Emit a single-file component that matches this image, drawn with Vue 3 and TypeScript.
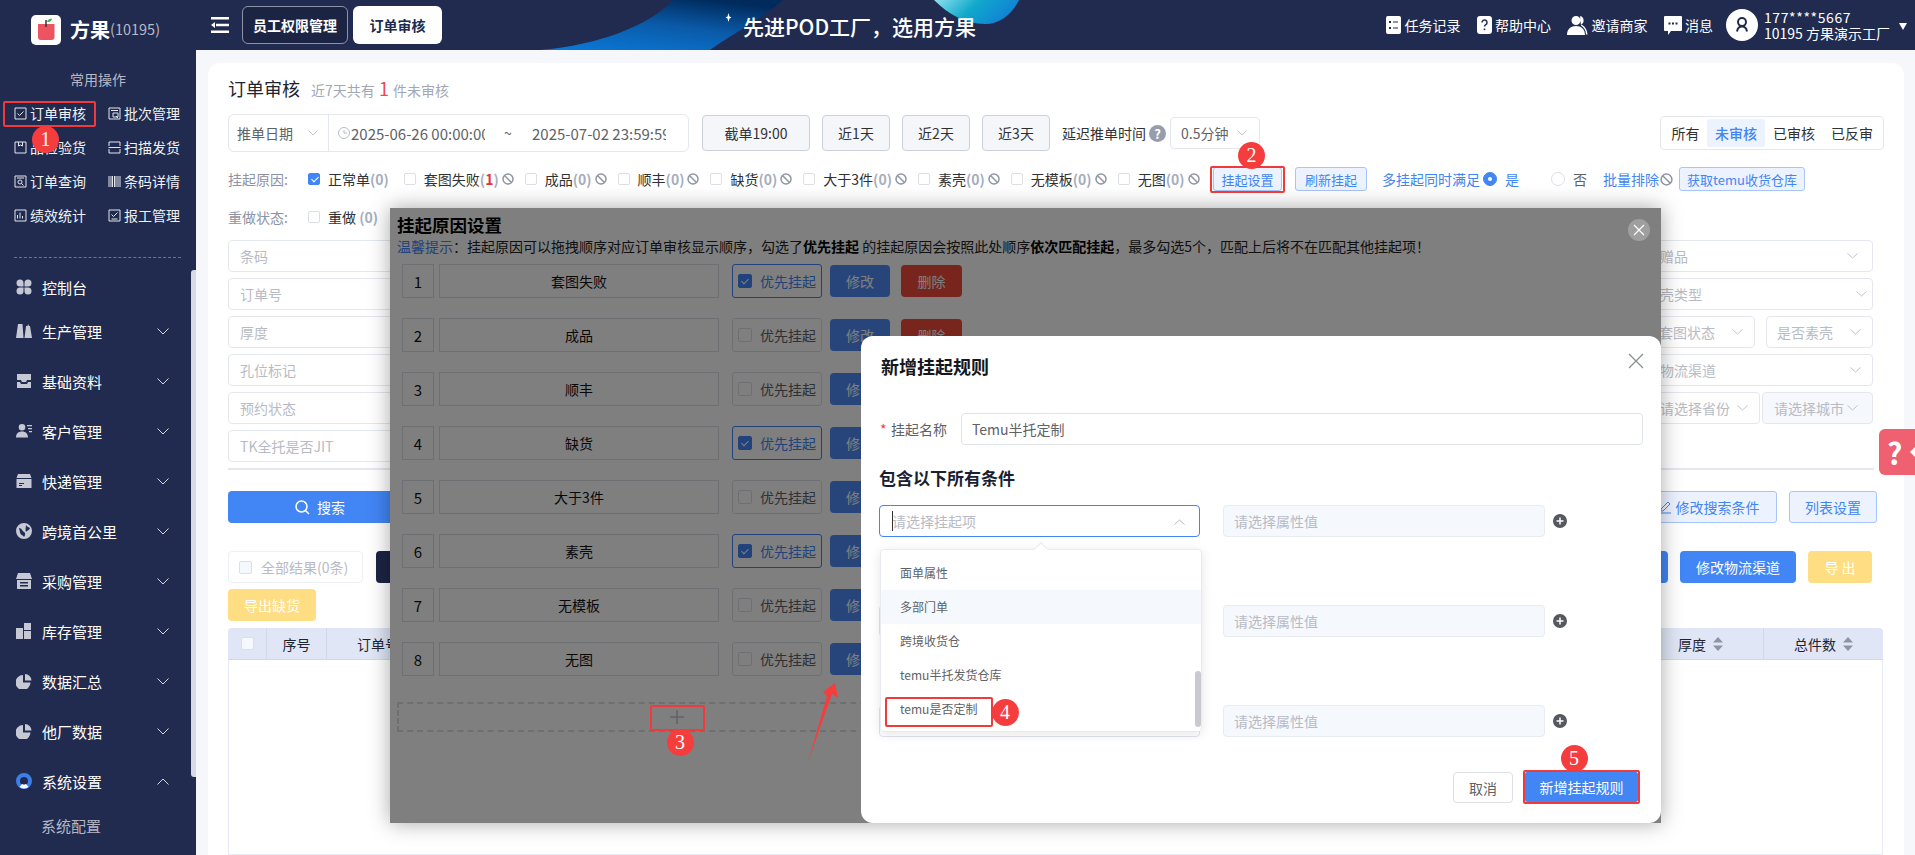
<script setup lang="ts">
interface MenuItem { name: string; d: string; d2?: string; open?: boolean; first?: boolean; active?: boolean; noArrow?: boolean }
const quick = [
  { name: '订单审核', d: 'M1 1h11v11H1z M3.5 6.5l2 2 4-4' },
  { name: '批次管理', d: 'M1 1h11v11H1z M3 3.5h7 M5 6h5v4H5z M8 9l2 2' },
  { name: '品检验货', d: 'M1 1h11v11H1z M4.5 1v4l2-1 2 1V1' },
  { name: '扫描发货', d: 'M1 5V1h11v4 M0.5 6.5h12 M1 8v4h11V8' },
  { name: '订单查询', d: 'M1 1h11v11H1z M3 3h7 M6 5a2 2 0 1 1 0 4 2 2 0 0 1 0-4z M7.5 8.5l2 2' },
  { name: '条码详情', d: 'M1 1v11 M3 1v11 M4.5 1v11 M6.5 1v11 M8 1v11 M10 1v11 M12 1v11' },
  { name: '绩效统计', d: 'M1 1h11v11H1z M3.5 9.5V6 M6 9.5V3.5 M8.5 9.5V7' },
  { name: '报工管理', d: 'M1 1h11v11H1z M3.5 5.5l2 2 4-4 M3.5 10h6' }
]
const menus: MenuItem[] = [
  { name: '控制台', first: true, noArrow: true, d: 'M7.500 7.500H4a3.500 3.500 0 1 1 3.500-3.500z M8.500 7.500V4a3.500 3.500 0 1 1 3.500 3.500z M7.500 8.500V12a3.500 3.500 0 1 1-3.500-3.500z M8.500 8.500H12a3.500 3.500 0 1 1-3.500 3.500z' },
  { name: '生产管理', d: 'M2 1h4.500l1 14H0z M10 3h1.500l.5-2 1 2h1l2 12H8.500z' },
  { name: '基础资料', d: 'M1 1h14v6h-4l-1 2H6L5 7H1z M1 9h3l1 2h6l1-2h3v6H1z' },
  { name: '客户管理', d: 'M6 1a3.300 3.300 0 1 1 0 6.600A3.300 3.300 0 0 1 6 1z M0 14.500c0-4 2.500-6 6-6s6 2 6 6z M11 2h5v1.300h-5z M12 5h4v1.300h-4z M13 8h3v1.300h-3z' },
  { name: '快递管理', d: 'M2 1h12l1.500 4H.5z M.5 6h15v9H.5z M3 10h5v1H3z M3 12h3v1H3z' },
  { name: '跨境首公里', d: 'M8 0a8 8 0 1 1 0 16A8 8 0 0 1 8 0z M3 5c3 0 3 3 5 4s1 4 0 5c-1-2-4-2-4-5z M10 2c1 2 3 2 4 3-1 3-3 2-4 4-1-2 0-5 0-7z' },
  { name: '采购管理', d: 'M2 0h12l2 6H0z M1 7h14v9H1z M4 9h8v1.500H4z M4 12h8v1.500H4z' },
  { name: '库存管理', d: 'M0 5h7v11H0z M8 0h7v7H8z M8 8h7v8H8z' },
  { name: '数据汇总', d: 'M7 2v7.500h7.500A7.500 7.500 0 1 1 7 2z M9 1a6.500 6.500 0 0 1 6.500 6.500H9z' },
  { name: '他厂数据', d: 'M7 2v7.500h7.500A7.500 7.500 0 1 1 7 2z M9 1a6.500 6.500 0 0 1 6.500 6.500H9z' },
  { name: '系统设置', active: true, open: true, d: 'M8 0a8 8 0 1 1 0 16A8 8 0 0 1 8 0z M8 4a4 4 0 1 0 0 8 4 4 0 0 0 0-8z', d2: 'M3.500 14l2.500-3a4 4 0 0 0 4 0l2.500 3a8 8 0 0 1-9 0z' }
]
const reasons = [
  { name: '套图失败', count: 1 }, { name: '成品', count: 0 }, { name: '顺丰', count: 0 }, { name: '缺货', count: 0 },
  { name: '大于3件', count: 0 }, { name: '素壳', count: 0 }, { name: '无模板', count: 0 }, { name: '无图', count: 0 }
]
const filterRows = [
  { left: '条码', right: [{ text: '是否赠品', cls: 'w253 ch14' }] },
  { left: '订单号', right: [{ text: '手机壳类型', cls: 'w253 ch5' }] },
  { left: '厚度', right: [{ text: '套图状态', cls: 'w107 ch10' }, { text: '是否素壳', cls: 'w107 ch10' }] },
  { left: '孔位标记', right: [{ text: '物流渠道', cls: 'w225 ch10' }] },
  { left: '预约状态', right: [{ text: '请选择省份', cls: 'w112 ch10' }, { text: '请选择城市', cls: 'w111 ch14 off' }] },
  { left: 'TK全托是否JIT', right: [] }
]
const rules = [
  { name: '套图失败', on: true }, { name: '成品', on: false }, { name: '顺丰', on: false }, { name: '缺货', on: true },
  { name: '大于3件', on: false }, { name: '素壳', on: true }, { name: '无模板', on: false }, { name: '无图', on: false }
]
const options = ['面单属性', '多部门单', '跨境收货仓', 'temu半托发货仓库', 'temu是否定制']
const boxes = [
  { l: 3, t: 101, w: 93, h: 26 }, { l: 1210, t: 166, w: 75, h: 27 }, { l: 650, t: 705, w: 55, h: 26 },
  { l: 885, t: 697, w: 108, h: 30 }, { l: 1523, t: 770, w: 117, h: 34 }
]
const badges = [
  { n: 1, x: 45.5, y: 139.5 }, { n: 2, x: 1251.5, y: 155 }, { n: 3, x: 680, y: 742 }, { n: 4, x: 1005, y: 712 }, { n: 5, x: 1574, y: 758 }
]
</script>

<template>
  <div class="app">
    <header class="topbar">
      <svg class="swoosh" width="1915" height="50" viewBox="0 0 1915 50" aria-hidden="true">
        <defs>
          <linearGradient id="sw" x1="0.1" y1="1" x2="0.7" y2="0">
            <stop offset="0" stop-color="#0b78d6" />
            <stop offset="0.55" stop-color="#0a5aa8" />
            <stop offset="1" stop-color="#002b5c" />
          </linearGradient>
          <linearGradient id="bb" x1="0" y1="0" x2="1" y2="0.3">
            <stop offset="0" stop-color="#8fe0ee" />
            <stop offset="0.5" stop-color="#10a9cb" />
            <stop offset="1" stop-color="#1180d6" />
          </linearGradient>
        </defs>
        <path d="M540 50C600 45 650 25 673 0H783C760 20 730 35 710 50Z" fill="url(#sw)" />
        <path d="M934 0H1019C1012 14 1000 24 985 24C965 24 948 14 934 0Z" fill="url(#bb)" />
        <path d="M728.500 13l1 3.500 2 1-2 1-1 3.500-1-3.500-2-1 2-1z" fill="#fff" />
      </svg>
      <div class="brand">
        <svg class="logo" width="30" height="30" viewBox="0 0 30 30">
          <rect width="30" height="30" rx="5" fill="#fff" />
          <path d="M7 9h16.500v13a3 3 0 0 1-3 3H10a3 3 0 0 1-3-3z" fill="#ee5361" />
          <path d="M15 5v7" stroke="#333" stroke-width="1.500" />
          <path d="M16 7c1-3 3-3.500 5-3.500 0 2-2 4-5 3.500z" fill="#3bb24a" />
        </svg>
        <b class="brand-name">方果</b><span class="brand-id">(10195)</span>
      </div>
      <svg class="burger" width="18" height="16" viewBox="0 0 18 16">
        <path d="M0 0h18v2.500H0z M5 6.700h13v2.500H5z M0 13.500h18V16H0z M4 5v6L0 8z" fill="#fff" />
      </svg>
      <div class="tab dark">员工权限管理</div>
      <div class="tab light">订单审核</div>
      <div class="slogan">先进POD工厂，选用方果</div>
      <nav class="tools">
        <span class="tool first">
          <svg width="15" height="18" viewBox="0 0 15 18"><rect width="15" height="18" rx="2" fill="#fff" /><path d="M3 5h2v2H3z M3 11h2v2H3z M7 5.500h5v1H7z M7 11.500h5v1H7z" fill="#212b4f" /></svg>任务记录
        </span>
        <span class="tool">
          <svg width="15" height="18" viewBox="0 0 15 18"><rect width="15" height="18" rx="3" fill="#fff" /><path d="M5 6.500a2.500 2.500 0 1 1 3.800 2.100c-.9.600-1.300 1-1.300 2" fill="none" stroke="#212b4f" stroke-width="1.500" /><path d="M6.700 12.500h1.600v1.700H6.700z" fill="#212b4f" /></svg>帮助中心
        </span>
        <span class="tool">
          <svg width="21" height="20" viewBox="0 0 21 20"><path d="M9 1a4.500 4.500 0 1 1 0 9 4.500 4.500 0 0 1 0-9z M0 20c0-6 4-9 9-9s9 3 9 9z M13 1a4.500 4.500 0 0 1 1 8.500c3 1 6 4 6.500 10H19c0-4-2-7-5-9z" fill="#fff" fill-rule="evenodd" /></svg>邀请商家
        </span>
        <span class="tool">
          <svg width="18" height="20" viewBox="0 0 18 20"><path d="M1 1h16a1 1 0 0 1 1 1v13a1 1 0 0 1-1 1H7l-3 4v-4H1a1 1 0 0 1-1-1V2a1 1 0 0 1 1-1z" fill="#fff" /><path d="M4.500 7.500h2v2h-2z M8 7.500h2v2H8z M11.500 7.500h2v2h-2z" fill="#212b4f" /></svg>消息
        </span>
        <svg class="avatar" width="32" height="32" viewBox="0 0 32 32">
          <circle cx="16" cy="16" r="16" fill="#fff" />
          <path d="M16 9a4 4 0 0 1 4 4c0 2-1.500 4-4 4s-4-2-4-4a4 4 0 0 1 4-4z M11 22.500c.5-3 2-5 5-5s4.500 2 5 5" fill="none" stroke="#212b4f" stroke-width="2" />
        </svg>
        <div class="user"><div class="phone">177****5667</div><div>10195&nbsp;方果演示工厂</div></div>
        <svg class="caret" width="8" height="7" viewBox="0 0 8 7"><path d="M0 0h8L4 7z" fill="#fff" /></svg>
      </nav>
    </header>

    <div class="body">
      <aside class="side">
        <div class="side-title">常用操作</div>
        <div class="quick">
          <div v-for="q in quick" :key="q.name" class="quick-item">
            <svg width="13" height="13" viewBox="0 0 13 13"><path :d="q.d" fill="none" stroke="#e4e6ee" stroke-width="1" /></svg>
            <span>{{ q.name }}</span>
          </div>
        </div>
        <div class="side-divider"></div>
        <div v-for="m in menus" :key="m.name" class="menu-item" :class="{ first: m.first }">
          <svg width="16" height="16" viewBox="0 0 16 16">
            <path :d="m.d" :fill="m.active ? '#3d7fe8' : '#c6c9d4'" fill-rule="evenodd" />
            <path v-if="m.d2" :d="m.d2" fill="#fff" />
          </svg>
          <span class="menu-name">{{ m.name }}</span>
          <svg v-if="!m.noArrow" class="menu-arrow" width="12" height="7" viewBox="0 0 12 7">
            <path :d="m.open ? 'M.5 6.500L6 1l5.500 5.500' : 'M.5.5L6 6 11.500.5'" fill="none" stroke="#d6d9e2" stroke-width="1" />
          </svg>
        </div>
        <div class="sub-item">系统配置</div>
        <div class="side-scroll"></div>
      </aside>

      <main class="main">
        <section class="card">
          <div class="title-row">
            <h1>订单审核</h1>
            <span class="sub">近7天共有 <em>1</em> 件未审核</span>
          </div>

          <div class="row-one">
            <div class="range">
              <div class="range-type">推单日期
                <svg width="10" height="6" viewBox="0 0 10 6"><path d="M.5.5L5 5 9.500.5" fill="none" stroke="#c0c4cc" /></svg>
              </div>
              <svg class="clock" width="12" height="12" viewBox="0 0 12 12"><circle cx="6" cy="6" r="5.500" fill="none" stroke="#b8bbc4" /><path d="M6 3v3h3" fill="none" stroke="#b8bbc4" /></svg>
              <span class="date">2025-06-26 00:00:00</span>
              <span class="tilde">~</span>
              <span class="date">2025-07-02 23:59:59</span>
            </div>
            <button class="plain wide">截单19:00</button>
            <button class="plain">近1天</button>
            <button class="plain">近2天</button>
            <button class="plain">近3天</button>
            <span class="delay">延迟推单时间</span>
            <span class="help">?</span>
            <div class="mini-select">0.5分钟
              <svg width="10" height="6" viewBox="0 0 10 6"><path d="M.5.5L5 5 9.500.5" fill="none" stroke="#c0c4cc" /></svg>
            </div>
            <div class="toggle">
              <span>所有</span><span class="on">未审核</span><span>已审核</span><span>已反审</span>
            </div>
          </div>

          <div class="row-two">
            <span class="row-label">挂起原因:</span>
            <div class="reasons">
              <span class="reason normal"><i class="check on"></i><span>正常单<b class="cnt">(0)</b></span></span>
              <span v-for="r in reasons" :key="r.name" class="reason">
                <i class="check"></i>
                <span>{{ r.name }}<b class="cnt">(<em v-if="r.count">{{ r.count }}</em><template v-else>0</template>)</b></span>
                <svg width="12" height="12" viewBox="0 0 12 12"><circle cx="6" cy="6" r="5" fill="none" stroke="#8f95a3" stroke-width="1.500" /><path d="M2.500 2.500l7 7" stroke="#8f95a3" stroke-width="1.500" /></svg>
              </span>
            </div>
            <button class="soft s69">挂起设置</button>
            <button class="soft s72">刷新挂起</button>
            <span class="link l1">多挂起同时满足</span>
            <i class="radio on"></i>
            <span class="link l2">是</span>
            <i class="radio r2"></i>
            <span class="no">否</span>
            <span class="link l3">批量排除</span>
            <svg class="ban-link" width="13" height="13" viewBox="0 0 12 12"><circle cx="6" cy="6" r="5" fill="none" stroke="#8f95a3" stroke-width="1.400" /><path d="M2.500 2.500l7 7" stroke="#8f95a3" stroke-width="1.400" /></svg>
            <button class="soft s126">获取temu收货仓库</button>
          </div>

          <div class="row-three">
            <span class="row-label">重做状态:</span>
            <span class="reason redo"><i class="check"></i><span>重做 <b class="cnt">(0)</b></span></span>
          </div>

          <div class="filters">
            <div v-for="row in filterRows" :key="row.left" class="filter-row">
              <div class="field left">{{ row.left }}</div>
              <div class="right-group">
                <div v-for="f in row.right" :key="f.text" class="field sel" :class="f.cls">
                  {{ f.text }}
                  <svg width="11" height="6" viewBox="0 0 11 6"><path d="M.5.500L5.500 5l5-4.500" fill="none" stroke="#c0c4cc" /></svg>
                </div>
              </div>
            </div>
          </div>
          <div class="split"></div>

          <div class="row-search">
            <button class="primary search">
              <svg width="15" height="15" viewBox="0 0 15 15"><circle cx="6.500" cy="6.500" r="5.500" fill="none" stroke="#fff" stroke-width="1.500" /><path d="M10.500 10.500l3.500 3.500" stroke="#fff" stroke-width="1.500" /></svg>
              搜索
            </button>
            <div class="search-right">
              <button class="soft big edit">
                <svg width="14" height="14" viewBox="0 0 14 14"><path d="M1 13h12 M3 9l7-7 2 2-7 7H3z" fill="none" stroke="#4285f4" /></svg>
                修改搜索条件
              </button>
              <button class="soft big set">列表设置</button>
            </div>
          </div>

          <div class="row-actions">
            <div class="all"><i class="check pale"></i>全部结果(0条)</div>
            <button class="navy"></button>
            <div class="action-right">
              <button class="primary a1"></button>
              <button class="primary a2">修改物流渠道</button>
              <button class="yellow a3">导 出</button>
            </div>
          </div>
          <div class="row-export"><button class="yellow">导出缺货</button></div>

          <div class="table">
            <div class="thead">
              <div class="th c1"><i class="check head"></i></div>
              <div class="th c2">序号</div>
              <div class="th c3">订单号</div>
              <div class="th grow"></div>
              <div class="th c4">厚度
                <svg width="10" height="14" viewBox="0 0 10 14"><path d="M5 0l5 5.500H0z M5 14L0 8.500h10z" fill="#8d94a6" /></svg>
              </div>
              <div class="th c5">总件数
                <svg width="10" height="14" viewBox="0 0 10 14"><path d="M5 0l5 5.500H0z M5 14L0 8.500h10z" fill="#8d94a6" /></svg>
              </div>
            </div>
            <div class="tbody"></div>
          </div>
        </section>
      </main>
    </div>

    <div class="help-tab"><span>?</span><i></i></div>

    <section class="panel">
      <h2>挂起原因设置</h2>
      <p class="tip"><span>温馨提示</span>：挂起原因可以拖拽顺序对应订单审核显示顺序，勾选了<b>优先挂起</b> 的挂起原因会按照此处顺序<b>依次匹配挂起</b>，最多勾选5个，匹配上后将不在匹配其他挂起项！</p>
      <div class="rules">
        <div v-for="(r, i) in rules" :key="r.name" class="rule">
          <div class="r-num">{{ i + 1 }}</div>
          <div class="r-name">{{ r.name }}</div>
          <div class="r-check" :class="{ on: r.on }"><i class="check big" :class="{ on: r.on }"></i>优先挂起</div>
          <button class="r-btn blue">修改</button>
          <button class="r-btn red">删除</button>
        </div>
      </div>
      <div class="dash">
        <svg width="14" height="14" viewBox="0 0 14 14"><path d="M7 0v14 M0 7h14" stroke="#c0c4cc" stroke-width="1.500" /></svg>
      </div>
      <div class="panel-close">
        <svg width="12" height="12" viewBox="0 0 12 12"><path d="M1 1l10 10 M11 1L1 11" stroke="#fff" stroke-width="1.200" /></svg>
      </div>
    </section>

    <section class="dialog">
      <h3>新增挂起规则</h3>
      <svg class="dialog-close" width="16" height="16" viewBox="0 0 16 16"><path d="M1 1l14 14 M15 1L1 15" stroke="#8a8d94" stroke-width="1.300" /></svg>
      <div class="name-row">
        <span class="star">*</span><label>挂起名称</label>
        <div class="name-input">Temu半托定制</div>
      </div>
      <h4>包含以下所有条件</h4>
      <div v-for="n in 3" :key="n" class="cond">
        <div class="cond-select" :class="{ focus: n === 1 }">
          <span v-if="n === 1" class="caret-line"></span>请选择挂起项
          <svg width="11" height="6" viewBox="0 0 11 6"><path d="M.5 5.500L5.500 1l5 4.500" fill="none" stroke="#b8bbc4" /></svg>
        </div>
        <div class="cond-value">请选择属性值</div>
        <svg class="cond-plus" width="14" height="14" viewBox="0 0 14 14"><circle cx="7" cy="7" r="7" fill="#55585f" /><path d="M7 3.500v7 M3.500 7h7" stroke="#fff" stroke-width="1.500" /></svg>
      </div>
      <div class="dialog-foot">
        <button class="cancel">取消</button>
        <button class="confirm">新增挂起规则</button>
      </div>
      <div class="dropdown">
        <span class="pointer"></span>
        <div v-for="(o, i) in options" :key="o" class="opt" :class="{ hover: i === 1 }">{{ o }}</div>
        <span class="dd-scroll"></span>
      </div>
    </section>

    <div v-for="(b, i) in boxes" :key="i" class="mark"
      :style="{ left: b.l + 'px', top: b.t + 'px', width: b.w + 'px', height: b.h + 'px' }"></div>
    <div v-for="b in badges" :key="b.n" class="badge"
      :style="{ left: b.x - 13.5 + 'px', top: b.y - 13.5 + 'px' }">{{ b.n }}</div>
    <svg class="arrow" width="40" height="85" viewBox="800 680 40 85">
      <path d="M835 683L838 698 832 694 808 762 827 696 823 692Z" fill="#f63d3d" />
    </svg>
  </div>
</template>

<style>
html, body { margin: 0; padding: 0; background: #f6f7fb; }
</style>

<style scoped>
* { box-sizing: border-box; }
button { font-family: inherit; cursor: pointer; padding: 0; }
i, em { font-style: normal; }
.app { position: relative; width: 1915px; height: 855px; overflow: hidden; display: flex; flex-direction: column; font-family: "Noto Sans CJK SC", "Noto Sans", sans-serif; font-size: 14px; color: #303133; background: #f6f7fb; }

/* top bar */
.topbar { position: relative; flex: none; height: 50px; background: #212b4f; display: flex; align-items: center; color: #fff; }
.swoosh { position: absolute; left: 0; top: 0; }
.brand { position: relative; width: 211px; padding-left: 31px; display: flex; align-items: center; }
.logo { margin-top: 10px; flex: none; }
.brand-name { margin: 10px 0 0 9px; font-size: 20px; line-height: 30px; font-weight: 700; }
.brand-id { margin-top: 8px; font-size: 14.500px; color: #b6bac8; line-height: 30px; }
.burger { position: relative; flex: none; }
.tab { position: relative; height: 38px; border-radius: 6px; font-weight: 700; display: flex; align-items: center; justify-content: center; }
.tab.dark { margin-left: 13px; width: 106px; background: #1c2444; border: 1px solid #8d93a6; }
.tab.light { margin-left: 5px; width: 89px; background: #fff; color: #212b4f; }
.slogan { position: absolute; left: 743px; top: 13px; font-size: 21px; line-height: 26px; font-weight: 500; white-space: nowrap; }
.tools { position: relative; margin-left: auto; display: flex; align-items: center; padding-right: 8px; }
.tool { display: flex; align-items: center; gap: 3.500px; margin-right: 16px; white-space: nowrap; }
.avatar { margin-left: -3px; flex: none; }
.user { margin-left: 6px; font-size: 14px; line-height: 16px; white-space: nowrap; width: 125px; }
.phone { letter-spacing: .6px; }
.caret { margin-left: 10px; margin-top: 3px; }

/* layout */
.body { flex: 1; min-height: 0; display: flex; }
.side { position: relative; flex: none; width: 196px; background: #212b4f; color: #fff; }
.side-title { padding-top: 19px; line-height: 20px; text-align: center; color: #b6bac8; width: 196px; }
.quick { margin-top: 7px; display: grid; grid-template-columns: 94px 88px; grid-auto-rows: 34px; padding-left: 14px; }
.quick-item { display: flex; align-items: center; gap: 3px; white-space: nowrap; color: #f0f1f5; }
.side-divider { margin: 25px 15px 0 14px; border-top: 1px dashed #6b7290; }
.menu-item { height: 50px; display: flex; align-items: center; padding-left: 16px; position: relative; }
.menu-item.first { height: 38px; margin-top: 10px; }
.menu-name { margin-left: 10px; font-size: 15px; white-space: nowrap; }
.menu-arrow { position: absolute; left: 157px; top: 22px; }
.sub-item { height: 40px; line-height: 40px; padding-left: 41px; font-size: 15px; color: #b4b8c6; }
.side-scroll { position: absolute; left: 191px; top: 220px; width: 5px; height: 507px; background: #d8dbe5; border-radius: 3px 0 0 3px; }
.main { flex: 1; min-width: 0; padding: 13px 11px 0 12px; }
.card { height: 100%; background: #fff; border-radius: 12px 12px 0 0; padding: 0 20px; display: flex; flex-direction: column; }

.title-row { flex: none; height: 51px; display: flex; align-items: center; padding-bottom: 2px; }
.title-row h1 { margin: 0; font-size: 18px; font-weight: 400; color: #1f2433; }
.sub { margin-left: 11px; color: #a2a7b6; white-space: nowrap; }
.sub em { color: #f0484e; font-size: 18px; margin: 0 1px; }

.row-one { flex: none; height: 38px; display: flex; align-items: center; }
.range { width: 461px; height: 38px; border: 1px solid #e4e7ed; border-radius: 6px; display: flex; align-items: center; color: #606266; margin-right: 13px; white-space: nowrap; }
.range-type { width: 100px; height: 100%; border-right: 1px solid #e4e7ed; padding-left: 8px; display: flex; align-items: center; gap: 15px; flex: none; }
.clock { margin-left: 9px; flex: none; }
.date { width: 134px; overflow: hidden; margin-left: 1px; flex: none; color: #606266; font-size: 15px; }
.tilde { width: 48px; text-align: center; flex: none; color: #606266; margin-left: -1px; margin-right: -1px; }
.plain { height: 36px; width: 68px; background: #f5f6fa; border: 1px solid #ccd0da; border-radius: 4px; color: #303133; font-size: 14px; margin-right: 12px; }
.plain.wide { width: 108px; }
.delay { white-space: nowrap; width: 84px; }
.help { width: 17px; height: 17px; margin-left: 3px; border-radius: 50%; background: #979dac; color: #fff; font-size: 13px; font-weight: 700; line-height: 17px; text-align: center; flex: none; }
.mini-select { margin-left: 4px; width: 90px; height: 32px; border: 1px solid #e4e7ed; border-radius: 4px; display: flex; align-items: center; justify-content: space-between; padding: 0 12px 0 10px; color: #606266; white-space: nowrap; }
.toggle { margin-left: auto; width: 224px; height: 34px; border: 1px solid #e4e7ed; border-radius: 4px; padding: 2px 2px 2px 3px; display: flex; }
.toggle span { width: 58px; display: flex; align-items: center; justify-content: center; border-radius: 2px; }
.toggle span:first-child { width: 43px; }
.toggle .on { background: #ecf3ff; color: #4285f4; font-weight: 500; }

.row-two { flex: none; margin-top: 15px; height: 24px; display: flex; align-items: center; white-space: nowrap; }
.row-label { width: 80px; color: #8e93a3; flex: none; }
.reasons { width: 905px; flex: none; display: flex; align-items: center; gap: 11px; }
.reason { display: inline-flex; align-items: center; gap: 3px; }
.reason .check { margin-right: 5px; }
.reason.normal { margin-right: 4px; }
.cnt { color: #a6adbd; font-weight: 700; }
.cnt em { color: #e5343c; }
.check { display: inline-block; width: 12px; height: 12px; border: 1px solid #dcdfe6; border-radius: 2px; background: #fff; position: relative; flex: none; }
.check.on { background: #4285f4; border-color: #4285f4; }
.check.on::after { content: ""; position: absolute; left: 3.500px; top: 1px; width: 3px; height: 6px; border: solid #fff; border-width: 0 1.200px 1.200px 0; transform: rotate(45deg); }
.soft { height: 24px; background: #ecf3ff; border: 1px solid #a6c5fa; border-radius: 3px; color: #4285f4; font-size: 13px; flex: none; }
.s69 { width: 69px; }
.s72 { width: 72px; margin-left: 13px; }
.s126 { width: 126px; margin-left: 6px; }
.link { color: #4285f4; }
.l1 { margin-left: 15px; width: 98px; }
.l2 { margin-left: 8px; }
.l3 { margin-left: 16px; width: 56px; }
.radio { width: 14px; height: 14px; border-radius: 50%; border: 1px solid #dcdfe6; flex: none; margin-left: 3px; position: relative; }
.radio.on { background: #4285f4; border-color: #4285f4; }
.radio.on::after { content: ""; position: absolute; left: 4px; top: 4px; width: 4px; height: 4px; border-radius: 50%; background: #fff; }
.radio.r2 { margin-left: 32px; }
.no { margin-left: 8px; color: #606266; }
.ban-link { margin-left: 1px; flex: none; }

.row-three { flex: none; margin-top: 14px; height: 24px; display: flex; align-items: center; white-space: nowrap; }
.redo { gap: 0; }
.redo .check { margin-right: 8px; }

.filters { flex: none; margin-top: 11px; display: grid; grid-auto-rows: 32px; row-gap: 6px; }
.filter-row { display: flex; justify-content: space-between; }
.field { height: 100%; border: 1px solid #e4e7ed; border-radius: 4px; padding-left: 11px; display: flex; align-items: center; color: #b8bbc4; white-space: nowrap; position: relative; }
.field.left { width: 280px; }
.right-group { display: flex; gap: 11px; margin-right: 11px; }
.sel svg { position: absolute; top: 12px; }
.w253 { width: 253px; }
.w107 { width: 107px; padding-left: 10px; }
.w225 { width: 225px; margin-left: 0; }
.w112 { width: 112px; margin-right: -9px; }
.w111 { width: 111px; background: #f5f8fd; }
.ch14 svg { right: 14px; }
.ch5 svg { right: 5px; }
.ch10 svg { right: 11px; }
.split { flex: none; margin-top: 6px; height: 2px; background: #e5e7ef; margin-right: 10px; }

.row-search { flex: none; margin-top: 21px; height: 32px; display: flex; justify-content: space-between; padding-right: 7px; }
.primary { height: 32px; background: #4285f4; border: 0; border-radius: 4px; color: #fff; font-size: 14px; }
.search { width: 184px; display: flex; align-items: center; justify-content: center; gap: 7px; }
.search-right { display: flex; gap: 12px; }
.big { height: 32px; font-size: 14px; }
.edit { width: 137px; display: flex; align-items: center; justify-content: center; gap: 4px; }
.set { width: 88px; }
.row-actions { flex: none; margin-top: 28px; height: 32px; display: flex; align-items: center; padding-right: 12px; }
.all { width: 135px; height: 32px; border: 1px solid #eef0f6; border-radius: 4px; display: flex; align-items: center; padding-left: 10px; color: #b8bbc4; white-space: nowrap; }
.check.pale { width: 13px; height: 13px; background: #f5f8fd; margin-right: 9px; }
.navy { margin-left: 13px; width: 100px; height: 32px; background: #1c2444; border: 0; border-radius: 4px; }
.action-right { margin-left: auto; display: flex; gap: 12px; }
.a1 { width: 90px; }
.a2 { width: 116px; }
.yellow { height: 32px; width: 88px; background: #fedd83; border: 0; border-radius: 4px; color: #fff; font-size: 14px; }
.yellow.a3 { width: 64px; }
.row-export { flex: none; margin-top: 6px; height: 32px; }

.table { flex: 1; min-height: 0; margin-top: 7px; display: flex; flex-direction: column; margin-right: 1px; }
.thead { flex: none; height: 32px; background: #e0e6f5; border-bottom: 1px solid #d2d8ea; border-radius: 4px 4px 0 0; display: flex; }
.th { display: flex; align-items: center; justify-content: center; gap: 7px; border-right: 1px solid #d2d8ea; color: #1f2433; flex: none; }
.c1 { width: 39px; }
.c2 { width: 60px; }
.c3 { width: 102px; border-right: 0; }
.grow { flex: 1; border-right: 0; }
.c4 { width: 126px; }
.c5 { width: 119px; border-right: 0; }
.check.head { width: 13px; height: 13px; background: #f5f8fd; }
.tbody { flex: 1; border: 1px solid #e8ebf3; border-top: 0; }

.help-tab { position: absolute; left: 1879px; top: 429px; width: 36px; height: 46px; background: #ef6070; border-radius: 6px 0 0 6px; color: #fff; }
.help-tab span { position: absolute; left: 8px; top: 0; font-size: 30px; font-weight: 700; line-height: 46px; }
.help-tab i { position: absolute; right: 0; top: 18px; border: 5px solid transparent; border-right-color: #fff; border-left-width: 0; }

/* settings panel */
.panel { position: absolute; left: 390px; top: 208px; width: 1271px; height: 615px; background: #fff; padding: 6px 0 0 7px; box-shadow: 0 0 20px rgba(0, 0, 0, .35); }
.panel::after { content: ""; position: absolute; inset: 0; background: rgba(0, 0, 0, .5); }
.panel h2 { margin: 0; font-size: 17.500px; line-height: 22px; font-weight: 700; color: #000; }
.tip { margin: 0 0 1px; line-height: 20px; color: #222; white-space: nowrap; }
.tip span { color: #4285f4; }
.tip b { color: #000; }
.rules { margin-top: 8px; padding-left: 5px; display: flex; flex-direction: column; gap: 20px; }
.rule { height: 34px; display: flex; align-items: center; color: #111; }
.r-num, .r-name { height: 34px; border: 1px solid #dcdfe6; display: flex; align-items: center; justify-content: center; font-size: 14px; }
.r-num { width: 32px; font-size: 15px; }
.r-name { width: 280px; margin-left: 5px; }
.r-check { width: 90px; height: 34px; margin-left: 13px; border: 1px solid #dcdfe6; border-radius: 3px; display: flex; align-items: center; padding-left: 5px; color: #606266; white-space: nowrap; }
.r-check.on { border-color: #4285f4; color: #4285f4; }
.check.big { width: 14px; height: 14px; margin-right: 8px; }
.check.big.on::after { left: 4px; top: 1.500px; }
.r-btn { height: 32px; border: 0; border-radius: 4px; color: #fff; font-size: 14px; }
.blue { width: 60px; margin-left: 8px; background: #4f8bf5; }
.red { width: 61px; margin-left: 11px; background: #f04a3a; }
.dash { margin-top: 26px; width: 560px; height: 30px; border: 2px dashed #dcdfe6; display: flex; align-items: center; justify-content: center; }
.panel-close { position: absolute; z-index: 2; left: 1238px; top: 11px; width: 22px; height: 22px; border-radius: 50%; background: rgba(255, 255, 255, .25); display: flex; align-items: center; justify-content: center; }

/* dialog */
.dialog { position: absolute; left: 861px; top: 336px; width: 800px; height: 487px; background: #fff; border-radius: 12px; padding: 19px 18px 0; }
.dialog h3 { margin: 0 0 0 2px; font-size: 18px; line-height: 22px; font-weight: 700; color: #15171c; }
.dialog-close { position: absolute; left: 767px; top: 17px; }
.name-row { margin-top: 36px; height: 32px; display: flex; align-items: center; color: #606266; }
.star { width: 11px; margin-left: 1px; color: #f5413c; }
.name-row label { width: 70px; }
.name-input { width: 683px; height: 32px; border: 1px solid #e0e3ea; border-radius: 4px; padding-left: 10px; line-height: 30px; }
.dialog h4 { margin: 21px 0 15px; font-size: 17px; line-height: 24px; font-weight: 700; color: #1b1f33; }
.cond { height: 32px; display: flex; align-items: center; margin-bottom: 68px; }
.cond-select { position: relative; width: 321px; height: 32px; border: 1px solid #e0e3ea; border-radius: 4px; padding-left: 12px; display: flex; align-items: center; color: #b8bbc4; }
.cond-select.focus { border-color: #4285f4; }
.cond-select svg { position: absolute; right: 14px; top: 13px; }
.caret-line { position: absolute; left: 12px; top: 5px; width: 1px; height: 20px; background: #303133; }
.cond-value { margin-left: 23px; width: 322px; height: 32px; border: 1px solid #e8ebf3; border-radius: 4px; background: #f5f8fd; padding-left: 10px; display: flex; align-items: center; color: #b8bbc4; }
.cond-plus { margin-left: 8px; flex: none; }
.dialog-foot { position: absolute; left: 592px; top: 436px; display: flex; gap: 12px; }
.cancel { width: 60px; height: 31px; background: #fff; border: 1px solid #dcdfe6; border-radius: 4px; color: #606266; font-size: 14px; }
.confirm { width: 113px; height: 30px; background: #4285f4; border: 0; border-radius: 2px; color: #fff; font-size: 14px; }
.dropdown { position: absolute; left: 19px; top: 213px; width: 322px; height: 183px; background: #fff; border: 1px solid #e8eaf0; border-radius: 4px; box-shadow: 0 2px 12px rgba(0, 0, 0, .1); padding-top: 6px; color: #606266; font-size: 12px; }
.pointer { position: absolute; left: 155px; top: -6px; width: 10px; height: 10px; background: #fff; border: solid #e8eaf0; border-width: 1px 0 0 1px; transform: rotate(45deg); }
.opt { height: 34px; line-height: 34px; padding-left: 19px; }
.opt.hover { background: #f5f8fd; }
.dd-scroll { position: absolute; left: 314px; top: 121px; width: 6px; height: 56px; background: #c8cad0; border-radius: 3px; }

/* annotations */
.mark { position: absolute; border: 2.500px solid #f23a3a; border-radius: 2px; }
.badge { position: absolute; width: 27px; height: 27px; border-radius: 50%; background: #f63d3d; color: #fff; font-family: "Liberation Serif", serif; font-size: 20px; line-height: 27px; text-align: center; }
.arrow { position: absolute; left: 800px; top: 680px; }
</style>
